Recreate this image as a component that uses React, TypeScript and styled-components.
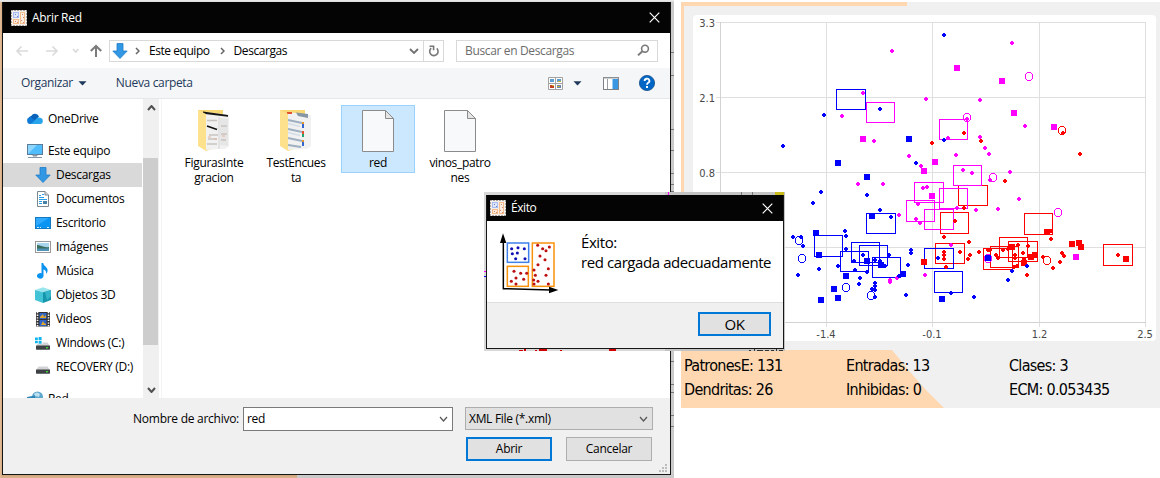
import React from "react";
import styled, { createGlobalStyle } from "styled-components";

const UI = '"Open Sans", "Noto Sans", sans-serif';
const TAHOMA = '"DejaVu Sans Condensed", "DejaVu Sans", sans-serif';
const BLUE = "#0000ff";
const PINK = "#ff00ff";
const RED = "#ff0000";

const Global = createGlobalStyle`
  * { box-sizing: border-box; }
  body { margin: 0; background: #fff; font-family: ${UI}; font-size: 12px; color: #000; }
  svg { display: block; flex: none; }
`;

const Page = styled.div`
  position: relative; display: flex; gap: 7px;
  width: 1160px; height: 478px; overflow: hidden; background: #fff;
`;

/* ---------- file dialog ---------- */
const EDGE_MARKS = [52, 75, 129, 150, 173, 184, 191, 361, 384, 392, 415, 426];
const edgeStops = EDGE_MARKS.map((y) => `#cacaca ${y}px, #777 ${y}px ${y + 1}px, #cacaca ${y + 1}px`).join(", ");

const Backdrop = styled.div`
  display: flex; width: 674px; height: 478px; padding: 2px 3px 3px 2px;
  background:
    linear-gradient(#ececec, #dcdcdc) 0 0 / 100% 2px no-repeat,
    linear-gradient(90deg, #e6c09a, #d3ab84) 0 0 / 2px 100% no-repeat,
    linear-gradient(#cda57d, #dfb58c) 0 100% / 297px 3px no-repeat,
    linear-gradient(${edgeStops});
`;
const Dialog = styled.div`
  display: flex; flex-direction: column; width: 669px; height: 473px;
  border: 1px solid #161616; border-width: 0 1px 1px 1px; background: #fff;
`;
const TitleBar = styled.div<{ $h: number }>`
  display: flex; align-items: center; flex: none; height: ${(p) => p.$h}px;
  background: #040404; color: #fff;
`;
const Text = styled.span<{ $s?: number; $size?: number; $c?: string }>`
  white-space: nowrap; line-height: 16px;
  letter-spacing: ${(p) => p.$s ?? -0.3}px;
  font-size: ${(p) => p.$size ?? 12}px;
  color: ${(p) => p.$c ?? "inherit"};
`;
const Spacer = styled.div`flex: 1;`;
const Gap = styled.div<{ $w: number }>`width: ${(p) => p.$w}px; flex: none;`;
const NavBar = styled.div`
  display: flex; align-items: center; flex: none; height: 35px; padding: 0 12px 0 12px;
`;
const NavIcons = styled.div`display: flex; width: 94px;`;
const AddressBox = styled.div`
  display: flex; align-items: center; width: 335px; height: 22px; border: 1px solid #d9d9d9;
`;
const Crumb = styled.div`display: flex; align-items: center; height: 20px;`;
const Refresh = styled.div`
  display: flex; align-items: center; justify-content: center;
  width: 20px; height: 20px; border-left: 1px solid #d9d9d9;
`;
const SearchBox = styled.div`
  display: flex; align-items: center; justify-content: space-between;
  width: 202px; height: 22px; margin-left: 12px; padding: 0 7px 0 8px; border: 1px solid #d9d9d9;
`;
const ToolBar = styled.div`
  display: flex; align-items: center; flex: none; height: 31px; padding: 0 15px 0 18px;
  background: #f5f6f7; border-bottom: 1px solid #e4e8ec; color: #1e395b;
`;
const Body = styled.div`display: flex; flex: none; height: 299px; overflow: hidden;`;
const Sidebar = styled.div`
  display: flex; flex-direction: column; width: 140px; height: 299px; padding-top: 8px; overflow: hidden;
`;
const NavItem = styled.div<{ $level: number; $on?: boolean; $gap?: number }>`
  display: flex; align-items: center; gap: 5px; flex: none; height: 24px; width: 139px;
  margin-top: ${(p) => p.$gap ?? 0}px;
  padding-left: ${(p) => (p.$level ? 32 : 24)}px;
  background: ${(p) => (p.$on ? "#d9d9d9" : "transparent")};
`;
const ScrollTrack = styled.div`
  display: flex; flex-direction: column; align-items: center;
  width: 16px; background: #f0f0f0;
`;
const ArrowSlot = styled.div<{ $h: number; $top: number }>`height: ${(p) => p.$h}px; padding-top: ${(p) => p.$top}px;`;
const Thumb = styled.div`width: 15px; height: 187px; margin-right: 1px; background: #cdcdcd;`;
const Files = styled.div`
  display: flex; align-items: flex-start; gap: 8px; flex: 1;
  margin-left: 2px; padding: 6px 0 0 15px; border-left: 1px solid #f4f4f4;
`;
const FileCell = styled.div<{ $on?: boolean }>`
  display: flex; flex-direction: column; align-items: center; width: 74px; height: 68px; padding-top: 3px;
  border: 1px solid ${(p) => (p.$on ? "#99d1ff" : "transparent")};
  background: ${(p) => (p.$on ? "#cce8ff" : "transparent")};
`;
const FileName = styled.div<{ $s: number }>`
  margin-top: 3px; line-height: 15px; text-align: center; white-space: pre; letter-spacing: ${(p) => p.$s}px;
`;
const Footer = styled.div`
  display: flex; flex-direction: column; gap: 6px; flex: 1; padding: 9px 0 0 0; background: #f0f0f0;
`;
const FooterRow = styled.div`display: flex; align-items: flex-start;`;
const FieldLabel = styled.div`
  width: 240px; height: 23px; display: flex; align-items: center; justify-content: flex-end; padding-right: 4px;
`;
const Field = styled.div<{ $w: number; $h: number; $flat?: boolean }>`
  display: flex; align-items: center; justify-content: space-between;
  width: ${(p) => p.$w}px; height: ${(p) => p.$h}px; padding: 0 4px 0 3px;
  border: 1px solid ${(p) => (p.$flat ? "#adadad" : "#7a7a7a")};
  background: ${(p) => (p.$flat ? "#e1e1e1" : "#fff")};
`;
const Buttons = styled.div`display: flex; gap: 14px; padding-left: 463px; height: 24px;`;
const Button = styled.div<{ $primary?: boolean; $w: number }>`
  display: flex; align-items: center; justify-content: center; width: ${(p) => p.$w}px; height: 24px;
  border: ${(p) => (p.$primary ? "2px solid #0078d7" : "1px solid #adadad")}; background: #e1e1e1;
`;
const Grip = styled.div`display: flex; justify-content: flex-end; margin-top: -3px; padding-right: 3px;`;

/* ---------- message box ---------- */
const Popup = styled.div`
  position: absolute; left: 484px; top: 192px; width: 301px; height: 159px; padding: 3px 1px 2px 2px;
  background: linear-gradient(90deg, #d8d8d8 0 60%, #c4c4c4 60%);
`;
const Fringe = styled.svg`position: absolute; left: 0; top: 0;`;
const PopupWindow = styled.div`
  position: relative; display: flex; flex-direction: column; width: 298px; height: 154px;
  border: 1px solid #161616; border-width: 0 1px 1px 1px; background: #fff;
`;
const Message = styled.div`
  display: flex; flex: none; height: 82px; padding: 11px 0 0 12px; gap: 22px; border-bottom: 1px solid #dfdfdf;
`;
const MessageText = styled.div`
  display: flex; flex-direction: column; white-space: nowrap; font-size: 15px; line-height: 20px; letter-spacing: -0.42px;
`;
const PopupFooter = styled.div`
  display: flex; flex: 1; justify-content: flex-end; padding: 9px 12px 0 0; background: #f0f0f0;
`;

/* ---------- chart panel ---------- */
const Panel = styled.div`
  display: flex; flex-direction: column; width: 479px; height: 406px; margin-top: 2px;
  background:
    linear-gradient(#ffd8b1, #ffd8b1) 0 0 / 3px 100% no-repeat,
    linear-gradient(#ffd8b1, #ffd8b1) 0 0 / 226px 4px no-repeat,
    #f0f0f0;
`;
const Card = styled.div`
  width: 463px; height: 326px; margin: 13px 0 9px 12px; border-radius: 4px; background: #fff; overflow: hidden;
`;
const Stats = styled.div`
  display: grid; grid-template-columns: 162px 163px 1fr; grid-auto-rows: 24px; align-items: center;
  flex: 1; padding: 4px 0 0 3px; font-family: ${TAHOMA};
  position: relative; isolation: isolate;
  &::before {
    content: ""; position: absolute; inset: 0; z-index: -1; background: #ffd8b1;
    clip-path: polygon(0 0, 211px 0, 230px 23px, 245px 40px, 263px 58px, 0 58px);
  }
`;

/* ---------- icons ---------- */
const Chevron = ({ w, h, color, sw = 1.5, dir = "down" }: { w: number; h: number; color: string; sw?: number; dir?: string }) => (
  <svg width={w} height={h} viewBox={`0 0 ${w} ${h}`} fill="none" stroke={color} strokeWidth={sw}>
    {dir === "down" && <path d={`M1 1 L${w / 2} ${h - 1} L${w - 1} 1`} />}
    {dir === "up" && <path d={`M1 ${h - 1} L${w / 2} 1 L${w - 1} ${h - 1}`} />}
    {dir === "right" && <path d={`M1 1 L${w - 1} ${h / 2} L1 ${h - 1}`} />}
  </svg>
);
const Caret = () => (
  <svg width="9" height="5" viewBox="0 0 9 5"><path d="M0.5 0.3H8.5L4.5 4.6Z" fill="#1e395b" /></svg>
);
const Close = () => (
  <svg width="11" height="11" viewBox="0 0 11 11" stroke="#fff" strokeWidth="1.2"><path d="M.7.7 10.3 10.3M10.3.7.7 10.3" /></svg>
);
const BLUE_DOTS = [[95, 208], [114, 205], [133, 208], [97, 223], [112, 221], [107, 238], [135, 238]];
const RED_DOTS = [
  [102, 276], [122, 282], [140, 282], [108, 296], [131, 300], [94, 306], [108, 314],
  [173, 198], [188, 208], [208, 203], [198, 214], [180, 230], [195, 241], [174, 256], [205, 268],
  [166, 288], [198, 288], [161, 302], [174, 306], [162, 314], [205, 314], [162, 272],
];
const ScatterArt = () => (
  <>
    <g fill="none" strokeWidth="4.5">
      <rect x="82" y="191" width="64" height="58" stroke="#3f80ea" />
      <rect x="82" y="261" width="63" height="60" stroke="#f9920a" />
      <rect x="157" y="191" width="65" height="130" stroke="#f9920a" />
    </g>
    <g fill="#1010b8">{BLUE_DOTS.map(([x, y], i) => <circle key={i} cx={x} cy={y} r="4.6" />)}</g>
    <g fill="#bc1010">{RED_DOTS.map(([x, y], i) => <circle key={i} cx={x} cy={y} r="4.6" />)}</g>
    <path d="M70 182V328L212 332" fill="none" stroke="#000" strokeWidth="4.5" />
    <path d="M69 162L79 191H60ZM235 332L207 322V342Z" />
  </>
);
const MessageIcon = () => <svg width="60" height="62" viewBox="57 158 180 186"><ScatterArt /></svg>;
const AppIcon = () => (
  <svg width="16" height="16" viewBox="0 0 16 16">
    <rect width="16" height="16" fill="#f3eeea" />
    <rect x="2.5" y="2.5" width="5" height="5" fill="#dfe6fa" stroke="#a9bdf2" />
    <rect x="2.5" y="9.5" width="5" height="4" fill="#fdeadb" stroke="#f5bd8b" />
    <rect x="9.5" y="2.5" width="4" height="11" fill="#fdeee4" stroke="#f5bd8b" />
    <path d="M4 4h1v1H4zM6 6h1v1H6z" fill="#6f80c8" />
    <path d="M11 4h1v1h-1zM12 7h1v1h-1zM10 10h1v1h-1zM12 12h1v1h-1zM4 11h1v1H4zM6 12h1v1H6z" fill="#d08478" />
    <rect x=".5" y=".5" width="15" height="15" fill="none" stroke="#555" strokeDasharray="1 2" />
  </svg>
);
const DownArrow = () => (
  <svg width="16" height="16" viewBox="0 0 16 16">
    <path d="M5 .5H11V8H15.2L8 15.5.8 8H5Z" fill="#3398e4" stroke="#1e7cc8" strokeWidth=".8" />
  </svg>
);
const OneDrive = () => (
  <svg width="16" height="12" viewBox="0 0 16 12">
    <path d="M1.7 6.5A3.2 3.2 0 0 1 4.2 3 4.4 4.4 0 0 1 12 3.4L8 8Z" fill="#0a62bb" />
    <path d="M3.2 11A3 3 0 0 1 .2 8 3 3 0 0 1 5.5 5.5L11 10Z" fill="#0f79d6" />
    <path d="M4 11 9.5 5.4A3.6 3.6 0 0 1 13.2 4.8 3.2 3.2 0 0 1 15.8 8 3 3 0 0 1 13 11Z" fill="#28a4ec" />
  </svg>
);
const Monitor = () => (
  <svg width="16" height="16" viewBox="0 0 16 16">
    <rect x=".5" y="1.5" width="15" height="10" fill="#4fbdfb" stroke="#5b7c98" />
    <path d="M1 11V2H10Z" fill="#8ed6ff" />
    <path d="M6 12H10V13H6ZM1 14.5H15" stroke="#8597a6" fill="#8597a6" />
  </svg>
);
const Documents = () => (
  <svg width="16" height="16" viewBox="0 0 16 16">
    <path d="M2.5.5H10L13.5 4V15.5H2.5Z" fill="#fff" stroke="#7d8790" />
    <path d="M10 .5V4H13.5" fill="#ddd" stroke="#7d8790" />
    <path d="M4 4.5H6M7 3.5H9M4 6.5H9M4 8.5H12M4 10.5H7M4 12.5H7" stroke="#2a9fe8" />
    <rect x="8" y="10" width="4" height="3" fill="#4681a8" />
  </svg>
);
const Desktop = () => (
  <svg width="16" height="16" viewBox="0 0 16 16">
    <rect x=".5" y="2.5" width="15" height="11" fill="#0b95f3" stroke="#1479c0" />
    <path d="M1 11V3H14Z" fill="#2faaff" />
    <path d="M2 12.5H4M5 12.5H6M12 12.5H14" stroke="#fff" strokeWidth=".8" />
  </svg>
);
const Pictures = () => (
  <svg width="16" height="16" viewBox="0 0 16 16">
    <rect x=".5" y="2.5" width="15" height="11" fill="#fff" stroke="#999" />
    <rect x="2" y="4" width="12" height="8" fill="#a9d6ef" />
    <path d="M2 6C5 6 9 9 14 8V10H2Z" fill="#3c6e5d" /><path d="M2 9.5H14V12H2Z" fill="#4f93b8" />
  </svg>
);
const Music = () => (
  <svg width="16" height="16" viewBox="0 0 16 16">
    <path d="M6.5 0H8.2C8.4 3 12.8 4 12.6 7.5 12.5 9 12 10 11.2 11 11.5 8.5 10.5 7 8.5 6.4V12.5A3.3 2.8 0 1 1 6.5 10.3Z" fill="#0b93f0" />
  </svg>
);
const Cube = () => (
  <svg width="16" height="16" viewBox="0 0 16 16">
    <path d="M0 3 8 .3 16 3 8 5.3Z" fill="#9be6ee" /><path d="M0 3 8 5.3V16L0 13Z" fill="#43c4d6" /><path d="M16 3 8 5.3V16L16 13Z" fill="#1596ad" />
    <path d="M10 5 16 3V9L12 13Z" fill="#35b5ca" />
  </svg>
);
const Videos = () => (
  <svg width="16" height="16" viewBox="0 0 16 16">
    <rect x="1" y="1" width="14" height="14.5" fill="#333" />
    <path d="M2.5 1V16M13.5 1V16" stroke="#fff" strokeWidth="1.6" strokeDasharray="1.3 1.3" />
    <rect x="4.5" y="2" width="7" height="6" fill="#2f65c8" /><rect x="4.5" y="9" width="7" height="6" fill="#2f65c8" />
    <path d="M5 6 8 3 9 6 11 4V7H5ZM6 14 8 10 9 12 11 13V14Z" fill="#e0a52d" />
  </svg>
);
const Drive = ({ win }: { win?: boolean }) => (
  <svg width="16" height="16" viewBox="0 0 16 16">
    <path d="M3.5 7.5H12.5L15 11H1Z" fill="#d2d3d5" /><rect x="1" y="10.5" width="14" height="4.2" rx=".6" fill="#3d4143" />
    <rect x="11" y="12" width="1.8" height="1.4" fill="#39e639" />
    {win && <><rect x="0" y="2" width="7.5" height="7" fill="#fff" /><path d="M0 2.5H2.8V5H0ZM3.6 2H6.6V5H3.6ZM0 5.8H2.8V8.3H0ZM3.6 5.8H6.6V8.8H3.6Z" fill="#11b5ee" /></>}
  </svg>
);
const Network = () => (
  <svg width="16" height="16" viewBox="0 0 16 16">
    <circle cx="10.5" cy="6" r="5.5" fill="#5da7cd" /><path d="M7 3Q10 0 13 3L12 6 8 5Z" fill="#bcdff0" /><path d="M0 6 8 4.5V12H0Z" fill="#2c86b8" />
  </svg>
);
const Folder = ({ kind }: { kind: number }) => (
  <svg width="34" height="43" viewBox="0 0 34 43">
    <path d="M1 1H26V36L9 42Z" fill="#f8d775" />
    <path d="M9 3 32 6V37L28 40H22L9 41Z" fill="#f1f1f1" />
    {kind === 0 ? (
      <>
        <path d="M22 8V40" stroke="#c9c9c9" strokeWidth=".7" />
        <path d="M23 9 31 10V37L23 36Z" fill="#e6e6e6" />
        <path d="M6 2.5 31 6V7.8L6 4.8Z" fill="#151515" />
        <path d="M10 17 20 20.5" stroke="#111" strokeWidth="1.5" />
        <path d="M10 11.5H20M12 26H21M11 30H20M24 17H30M24 25H30M24 31H29M10 35H20" stroke="#c9c4c0" strokeWidth="1.3" />
        <path d="M11 28H14M17 30H20M25 27H28" stroke="#e3b49e" />
      </>
    ) : (
      <>
        <path d="M17 3.5 29 5V9L19 7Z" fill="#8796a5" />
        <path d="M9 11 23 14M9 20 23 23M9 29 23 32M9 36 22 38" stroke="#9dafc0" strokeWidth="2.2" />
        <path d="M9 14.5 21 17.5M9 23.5 21 26.5" stroke="#d3dde6" strokeWidth="1.6" />
        <path d="M8 4H13" stroke="#e0532e" strokeWidth="2" />
        <path d="M24 13V15M24 31V33" stroke="#e3942b" strokeWidth="2" />
        <path d="M24 22V25" stroke="#e0532e" strokeWidth="2" />
        <path d="M24 15V19M24 33V37" stroke="#3465cf" strokeWidth="2" />
        <path d="M24 25V28" stroke="#23a070" strokeWidth="2" />
      </>
    )}
    <path d="M1 1 9 5V42L1 37Z" fill="#fee18d" />
  </svg>
);
const Sheet = () => (
  <svg width="34" height="43" viewBox="0 0 34 43">
    <path d="M1.5 1.5H24.5L32.5 9.5V42.5H1.5Z" fill="#f8f9fa" stroke="#8b8b8b" />
    <path d="M24.5 1.5V9.5H32.5Z" fill="#e5e5e5" stroke="#8b8b8b" />
  </svg>
);
const ViewIcon = () => (
  <svg width="15" height="13" viewBox="0 0 15 13">
    <path d="M.5.5H14.5V12.5H.5ZM7.5 0V13M0 6.5H15" fill="#fff" stroke="#a2a2a2" />
    <path d="M2 2H6V5H2ZM9 2H13V5H9Z" fill="#5d9ed2" /><path d="M2 8H6V11H2Z" fill="#c0401d" /><path d="M9 8H13V11H9Z" fill="#6b86ae" />
    <path d="M10 4H13V5H10ZM9 9H12V10H9ZM4 8H6V9H4Z" fill="#c5b037" />
  </svg>
);
const PaneIcon = () => (
  <svg width="16" height="13" viewBox="0 0 16 13">
    <rect x=".5" y=".5" width="15" height="12" fill="#fff" stroke="#7e8287" /><path d="M0 1H16M4.5 2V12" stroke="#9a9da1" />
    <path d="M9.5 2H15V12H9.5Z" fill="#3a97e3" />
  </svg>
);
const HelpIcon = () => (
  <svg width="16" height="16" viewBox="0 0 16 16">
    <circle cx="8" cy="8" r="7.6" fill="#0067c6" stroke="#154f8c" strokeWidth=".8" />
    <path d="M5.6 6A2.4 2.2 0 1 1 9.2 7.8Q8 8.5 8 9.8" fill="none" stroke="#fff" strokeWidth="1.8" /><rect x="7" y="11" width="2" height="2" fill="#fff" />
  </svg>
);
const NavArrows = () => (
  <svg width="94" height="22" viewBox="15 39 94 22" fill="none">
    <g stroke="#dadada" strokeWidth="1.6">
      <path d="M28 50H17M21.5 45.5 17 50 21.5 54.5M46 50H57M52.5 45.5 57 50 52.5 54.5" />
      <path d="M73 48 75.7 51 78.4 48" />
    </g>
    <path d="M96 56V45.5M90.8 50 96 45 101.2 50" stroke="#7b7b7b" strokeWidth="2" />
  </svg>
);
const RefreshIcon = () => (
  <svg width="12" height="14" viewBox="0 0 12 14" fill="none" stroke="#777" strokeWidth="1.6">
    <path d="M8.8 4.4A4.2 4.2 0 1 1 3.2 4.2" /><path d="M1.5 2.2H5.6V6.2" />
  </svg>
);
const Magnifier = () => (
  <svg width="13" height="13" viewBox="0 0 13 13" fill="none" stroke="#7a7a7a" strokeWidth="1.6">
    <circle cx="8" cy="4.7" r="3.4" /><path d="M5.4 7.2 1 11.4" strokeWidth="2" />
  </svg>
);

/* ---------- chart data ---------- */
type P = [number, number];
type Box = [number, number, number, number];
const dots: Record<string, P[]> = {
  [PINK]: [
    [892, 51], [863, 93], [842, 116], [874, 141], [909, 156], [858, 184], [883, 184], [1012, 43], [926, 99], [980, 100],
    [1025, 126], [967, 119], [948, 138], [980, 137], [985, 148], [989, 154], [956, 155], [921, 166], [963, 170], [972, 173],
    [1010, 172], [990, 180], [1019, 199], [923, 188], [927, 187], [899, 215], [918, 204], [916, 219], [920, 223], [925, 275],
    [957, 208], [951, 245], [897, 278], [976, 210], [998, 209], [890, 280], [890, 282],
  ],
  [BLUE]: [
    [824, 115], [783, 146], [880, 109], [916, 163], [821, 192], [867, 195], [944, 35], [944, 140], [813, 203],
    [880, 210], [891, 217], [845, 231], [846, 236], [846, 249], [793, 237], [801, 237], [803, 246], [798, 275], [819, 269],
    [838, 266], [854, 261], [863, 255], [855, 270], [867, 272], [860, 278], [859, 284], [875, 260], [880, 261], [885, 266],
    [889, 255], [911, 250], [911, 253], [908, 265], [899, 276], [875, 283], [875, 286], [875, 290], [872, 289], [875, 297],
    [906, 295], [938, 258], [951, 293], [974, 297], [1027, 266], [1012, 271], [1008, 280],
  ],
  [RED]: [
    [1063, 133], [964, 133], [932, 143], [981, 141], [1080, 154], [1005, 181], [955, 221], [944, 237], [969, 242], [960, 252],
    [944, 252], [944, 255], [944, 259], [946, 267], [970, 255], [968, 259], [979, 252], [964, 208], [1051, 231], [1051, 239],
    [990, 250], [988, 250], [996, 255], [998, 258], [1003, 250], [1018, 245], [1028, 246], [1023, 253], [1015, 255], [1015, 258],
    [1024, 259], [1017, 266], [1014, 267], [1008, 249], [1027, 275], [1043, 257], [1062, 253], [1064, 256], [1060, 262],
    [1053, 268], [1118, 255],
  ],
};
const squares: Record<string, P[]> = {
  [PINK]: [[863, 139], [957, 68], [1002, 81], [1014, 113], [1054, 127], [935, 162], [924, 171], [932, 196], [1076, 257]],
  [BLUE]: [
    [909, 139], [838, 163], [867, 177], [872, 216], [816, 233], [819, 255], [846, 276], [834, 289], [838, 298], [821, 300],
    [867, 261], [881, 265], [903, 274], [942, 299], [988, 258],
  ],
  [RED]: [[924, 262], [1047, 232], [1072, 244], [1079, 243], [1081, 247], [1126, 259], [1012, 247], [1035, 255], [1031, 257], [1024, 263]],
};
const boxes: Record<string, Box[]> = {
  [RED]: [
    [958, 185, 29, 20], [940, 212, 28, 21], [935, 243, 29, 20], [1024, 213, 28, 21], [999, 237, 28, 20], [1008, 241, 29, 20],
    [983, 248, 29, 21], [990, 246, 28, 21], [1103, 244, 29, 21],
  ],
  [BLUE]: [
    [836, 89, 29, 20], [866, 213, 29, 20], [814, 235, 28, 21], [840, 251, 28, 20], [851, 242, 28, 20], [859, 245, 28, 20],
    [872, 257, 28, 20], [924, 248, 29, 20], [934, 271, 28, 21],
  ],
  [PINK]: [
    [866, 102, 28, 20], [939, 119, 28, 20], [953, 165, 28, 20], [914, 182, 29, 20], [939, 188, 28, 20], [906, 200, 28, 21], [924, 209, 29, 20],
  ],
};
const rings: Record<string, P[]> = {
  [PINK]: [[1029, 76], [967, 117], [993, 177], [1058, 212], [988, 258]],
  [BLUE]: [[799, 240], [802, 258], [846, 287], [871, 295]],
  [RED]: [[1062, 130], [1047, 260]],
};
const dotPath = ([x, y]: P) => `M${x - 2} ${y - 1}h1v-1h2v1h1v2h-1v1h-2v-1h-1z`;
const ringPath = ([x, y]: P) =>
  `M${x - 2} ${y - 4}h4v1h-4zM${x - 2} ${y + 4}h4v1h-4z` +
  `M${x - 3} ${y - 3}h1v1h-1zM${x + 2} ${y - 3}h1v1h-1zM${x - 3} ${y + 3}h1v1h-1zM${x + 2} ${y + 3}h1v1h-1z` +
  `M${x - 4} ${y - 2}h1v5h-1zM${x + 3} ${y - 2}h1v5h-1z`;

const Chart = () => (
  <svg width="463" height="326" viewBox="693 15 463 326" fontFamily={TAHOMA} fontSize="11" fill="#484848">
    <g stroke="#dfdfdf" fill="none" shapeRendering="crispEdges">
      <path d="M826.5 22V327M932.5 22V327M1039.5 22V327M1145.5 22V327M716 22.5H1145M716 97.5H1145M716 172.5H1145M716 247.5H1145" />
      <path d="M720.5 22V327M716 322.5H1146" stroke="#d2d2d2" />
    </g>
    {[["3.3", 27], ["2.1", 102], ["0.8", 177]].map(([t, y]) => (
      <text key={t} x="715" y={y} textAnchor="end">{t}</text>
    ))}
    {[["-1.4", 826], ["-0.1", 932], ["1.2", 1039.5], ["2.5", 1145]].map(([t, x]) => (
      <text key={t} x={x} y="338" textAnchor="middle">{t}</text>
    ))}
    <g shapeRendering="crispEdges">
      {Object.entries(boxes).map(([c, list]) => (
        <g key={c} fill="none" stroke={c}>
          {list.map(([x, y, w, h], i) => <rect key={i} x={x + 0.5} y={y + 0.5} width={w} height={h} />)}
        </g>
      ))}
      {[RED, PINK, BLUE].map((c) => (
        <g key={c} fill={c}>
          {squares[c].map(([x, y], i) => <rect key={i} x={x - 3} y={y - 3} width="6" height="6" />)}
          <path d={dots[c].map(dotPath).join("")} />
          <path d={rings[c].map(ringPath).join("")} />
        </g>
      ))}
    </g>
  </svg>
);

const places: { label: string; icon: React.ReactNode; level: number; on?: boolean; gap?: number }[] = [
  { label: "OneDrive", icon: <OneDrive />, level: 0 },
  { label: "Este equipo", icon: <Monitor />, level: 0, gap: 8 },
  { label: "Descargas", icon: <DownArrow />, level: 1, on: true },
  { label: "Documentos", icon: <Documents />, level: 1 },
  { label: "Escritorio", icon: <Desktop />, level: 1 },
  { label: "Imágenes", icon: <Pictures />, level: 1 },
  { label: "Música", icon: <Music />, level: 1 },
  { label: "Objetos 3D", icon: <Cube />, level: 1 },
  { label: "Videos", icon: <Videos />, level: 1 },
  { label: "Windows (C:)", icon: <Drive win />, level: 1 },
  { label: "RECOVERY (D:)", icon: <Drive />, level: 1 },
  { label: "Red", icon: <Network />, level: 0, gap: 8 },
];

const stats = ["PatronesE: 131", "Entradas: 13", "Clases: 3", "Dendritas: 26", "Inhibidas: 0", "ECM: 0.053435"];

export default function App() {
  return (
    <>
      <Global />
      <Page>
        <Backdrop>
          <Dialog>
            <TitleBar $h={31}>
              <Gap $w={8} /><AppIcon /><Gap $w={5} />
              <Text>Abrir Red</Text><Spacer /><Close /><Gap $w={10} />
            </TitleBar>
            <NavBar>
              <NavIcons><NavArrows /></NavIcons>
              <AddressBox>
                <Crumb>
                  <Gap $w={2} /><DownArrow /><Gap $w={7} />
                  <Chevron w={5} h={8} dir="right" color="#666" /><Gap $w={9} />
                  <Text $s={-0.45}>Este equipo</Text><Gap $w={10} />
                  <Chevron w={5} h={8} dir="right" color="#666" /><Gap $w={9} />
                  <Text $s={-0.45}>Descargas</Text>
                </Crumb>
                <Spacer />
                <Chevron w={10} h={6} color="#707070" sw={1.8} /><Gap $w={4} />
                <Refresh><RefreshIcon /></Refresh>
              </AddressBox>
              <SearchBox><Text $c="#6d6d6d" $s={-0.35}>Buscar en Descargas</Text><Magnifier /></SearchBox>
            </NavBar>
            <ToolBar>
              <Text $s={-0.35}>Organizar</Text><Gap $w={5} /><Caret /><Gap $w={29} />
              <Text $s={-0.35}>Nueva carpeta</Text><Spacer />
              <ViewIcon /><Gap $w={10} /><Caret /><Gap $w={21} /><PaneIcon /><Gap $w={20} /><HelpIcon />
            </ToolBar>
            <Body>
              <Sidebar>
                {places.map((p) => (
                  <NavItem key={p.label} $level={p.level} $on={p.on} $gap={p.gap}>
                    {p.icon}<Text>{p.label}</Text>
                  </NavItem>
                ))}
              </Sidebar>
              <ScrollTrack>
                <ArrowSlot $h={59} $top={6}><Chevron w={9} h={6} dir="up" color="#505050" sw={2} /></ArrowSlot>
                <Thumb />
                <ArrowSlot $h={53} $top={42}><Chevron w={9} h={6} color="#505050" sw={2} /></ArrowSlot>
              </ScrollTrack>
              <Files>
                <FileCell><Folder kind={0} /><FileName $s={-0.3}>{"FigurasInte\ngracion"}</FileName></FileCell>
                <FileCell><Folder kind={1} /><FileName $s={-0.4}>{"TestEncues\nta"}</FileName></FileCell>
                <FileCell $on><Sheet /><FileName $s={-0.3}>red</FileName></FileCell>
                <FileCell><Sheet /><FileName $s={-0.35}>{"vinos_patro\nnes"}</FileName></FileCell>
              </Files>
            </Body>
            <Footer>
              <FooterRow>
                <FieldLabel><Text $s={-0.27}>Nombre de archivo:</Text></FieldLabel>
                <Field $w={210} $h={24}><Text>red</Text><Chevron w={9} h={6} color="#555" sw={1.2} /></Field>
                <Gap $w={12} />
                <Field $w={188} $h={23} $flat><Text>XML File (*.xml)</Text><Chevron w={9} h={6} color="#555" sw={1.2} /></Field>
              </FooterRow>
              <Buttons>
                <Button $w={86} $primary><Text>Abrir</Text></Button>
                <Button $w={86}><Text>Cancelar</Text></Button>
              </Buttons>
              <Grip>
                <svg width="8" height="8" viewBox="0 0 8 8" fill="#bcbcbc"><path d="M6 0h2v2h-2zM3 3h2v2h-2zM6 3h2v2h-2zM0 6h2v2h-2zM3 6h2v2h-2zM6 6h2v2h-2z" /></svg>
              </Grip>
            </Footer>
          </Dialog>
        </Backdrop>

        <Panel>
          <Card><Chart /></Card>
          <Stats>
            {stats.map((s) => <Text key={s} $size={16} $s={-0.7}>{s}</Text>)}
          </Stats>
        </Panel>

        <Popup>
          <Fringe width="301" height="159" viewBox="484 192 301 159" shapeRendering="crispEdges">
            <path d="M668 192h1v3h-1zM484 271h2v1h-2z" fill={PINK} /><path d="M484 276h2v1h-2z" fill={BLUE} />
            <path d="M775 192h9v3h-9z" fill="#c9bc1c" />
            <path d="M519 350h4v1h-4zM524 349h2v2h-2zM535 350h2v1h-2zM539 349h8v2h-8zM609 349h7v2h-7zM560 350h2v1h-2z" fill="#d00000" />
            <path d="M741 192h1v3h-1zM752 192h1v3h-1z" fill="#777" />
            <path d="M749 350h2v1h-2zM754 349h1v2h-1zM757 350h6v1h-6zM765 350h4v1h-4zM771 350h3v1h-3zM776 349h1v2h-1zM779 350h4v1h-4z" fill="#333" />
          </Fringe>
          <PopupWindow>
            <TitleBar $h={26}>
              <Gap $w={3} /><AppIcon /><Gap $w={5} />
              <Text $s={-0.45}>Éxito</Text><Spacer /><Close /><Gap $w={10} />
            </TitleBar>
            <Message>
              <MessageIcon />
              <MessageText><span>Éxito:</span><span>red cargada adecuadamente</span></MessageText>
            </Message>
            <PopupFooter><Button $w={73} $primary><Text $size={15} $s={-0.4}>OK</Text></Button></PopupFooter>
          </PopupWindow>
        </Popup>
      </Page>
    </>
  );
}
